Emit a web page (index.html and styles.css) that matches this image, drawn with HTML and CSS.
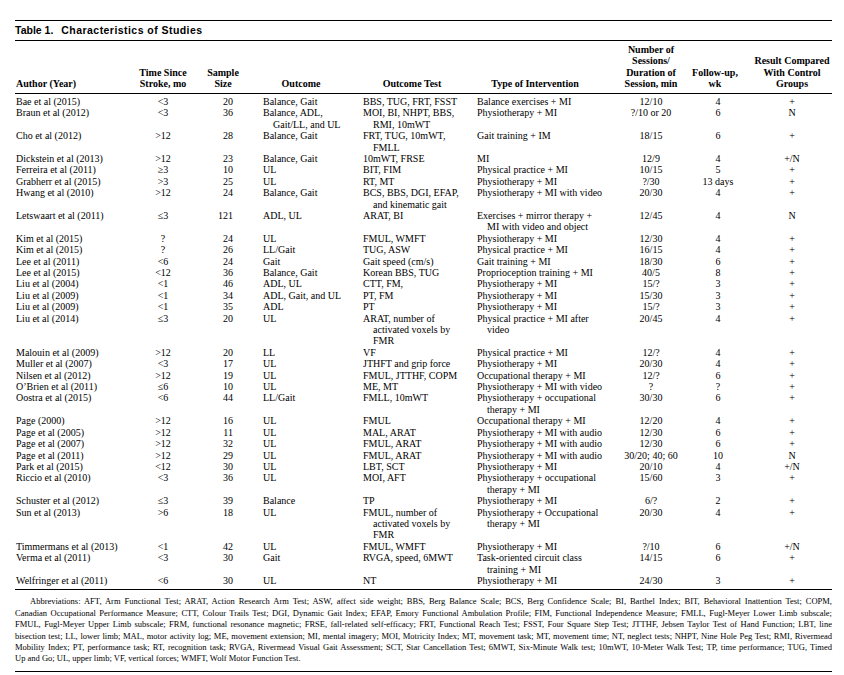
FILE: index.html
```html
<!DOCTYPE html>
<html lang="en">
<head>
<meta charset="utf-8">
<title>Table 1. Characteristics of Studies</title>
<link rel="stylesheet" href="styles.css">
</head>
<body>
<div class="page">
  <h1 class="title"><span class="num">Table 1.</span><span class="caption">Characteristics of Studies</span></h1>
  <table class="studies">
    <colgroup>
      <col class="w1"><col class="w2"><col class="w3"><col class="w4"><col class="w5"><col class="w6"><col class="w7"><col class="w8"><col class="w9">
    </colgroup>
    <thead>
      <tr>
        <th class="c1">Author (Year)</th>
        <th class="c2">Time Since<br>Stroke, mo</th>
        <th class="c3">Sample<br>Size</th>
        <th class="c4">Outcome</th>
        <th class="c5">Outcome Test</th>
        <th class="c6">Type of Intervention</th>
        <th class="c7">Number of<br>Sessions/<br>Duration of<br>Session, min</th>
        <th class="c8">Follow-up,<br>wk</th>
        <th class="c9">Result Compared<br>With Control<br>Groups</th>
      </tr>
    </thead>
    <tbody>
      <tr><td class="c1">Bae et al (2015)</td><td class="c2">&lt;3</td><td class="c3">20</td><td class="c4">Balance, Gait</td><td class="c5">BBS, TUG, FRT, FSST</td><td class="c6">Balance exercises + MI</td><td class="c7">12/10</td><td class="c8">4</td><td class="c9">+</td></tr>
      <tr><td class="c1">Braun et al (2012)</td><td class="c2">&lt;3</td><td class="c3">36</td><td class="c4">Balance, ADL,<br>Gait/LL, and UL</td><td class="c5">MOI, BI, NHPT, BBS,<br>RMI, 10mWT</td><td class="c6">Physiotherapy + MI</td><td class="c7">?/10 or 20</td><td class="c8">6</td><td class="c9">N</td></tr>
      <tr><td class="c1">Cho et al (2012)</td><td class="c2">&gt;12</td><td class="c3">28</td><td class="c4">Balance, Gait</td><td class="c5">FRT, TUG, 10mWT,<br>FMLL</td><td class="c6">Gait training + IM</td><td class="c7">18/15</td><td class="c8">6</td><td class="c9">+</td></tr>
      <tr><td class="c1">Dickstein et al (2013)</td><td class="c2">&gt;12</td><td class="c3">23</td><td class="c4">Balance, Gait</td><td class="c5">10mWT, FRSE</td><td class="c6">MI</td><td class="c7">12/9</td><td class="c8">4</td><td class="c9">+/N</td></tr>
      <tr><td class="c1">Ferreira et al (2011)</td><td class="c2">&ge;3</td><td class="c3">10</td><td class="c4">UL</td><td class="c5">BIT, FIM</td><td class="c6">Physical practice + MI</td><td class="c7">10/15</td><td class="c8">5</td><td class="c9">+</td></tr>
      <tr><td class="c1">Grabherr et al (2015)</td><td class="c2">&gt;3</td><td class="c3">25</td><td class="c4">UL</td><td class="c5">RT, MT</td><td class="c6">Physiotherapy + MI</td><td class="c7">?/30</td><td class="c8">13 days</td><td class="c9">+</td></tr>
      <tr><td class="c1">Hwang et al (2010)</td><td class="c2">&gt;12</td><td class="c3">24</td><td class="c4">Balance, Gait</td><td class="c5">BCS, BBS, DGI, EFAP,<br>and kinematic gait</td><td class="c6">Physiotherapy + MI with video</td><td class="c7">20/30</td><td class="c8">4</td><td class="c9">+</td></tr>
      <tr><td class="c1">Letswaart et al (2011)</td><td class="c2">&le;3</td><td class="c3">121</td><td class="c4">ADL, UL</td><td class="c5">ARAT, BI</td><td class="c6">Exercises + mirror therapy +<br>MI with video and object</td><td class="c7">12/45</td><td class="c8">4</td><td class="c9">N</td></tr>
      <tr><td class="c1">Kim et al (2015)</td><td class="c2">?</td><td class="c3">24</td><td class="c4">UL</td><td class="c5">FMUL, WMFT</td><td class="c6">Physiotherapy + MI</td><td class="c7">12/30</td><td class="c8">4</td><td class="c9">+</td></tr>
      <tr><td class="c1">Kim et al (2015)</td><td class="c2">?</td><td class="c3">26</td><td class="c4">LL/Gait</td><td class="c5">TUG, ASW</td><td class="c6">Physical practice + MI</td><td class="c7">16/15</td><td class="c8">4</td><td class="c9">+</td></tr>
      <tr><td class="c1">Lee et al (2011)</td><td class="c2">&lt;6</td><td class="c3">24</td><td class="c4">Gait</td><td class="c5">Gait speed (cm/s)</td><td class="c6">Gait training + MI</td><td class="c7">18/30</td><td class="c8">6</td><td class="c9">+</td></tr>
      <tr><td class="c1">Lee et al (2015)</td><td class="c2">&lt;12</td><td class="c3">36</td><td class="c4">Balance, Gait</td><td class="c5">Korean BBS, TUG</td><td class="c6">Proprioception training + MI</td><td class="c7">40/5</td><td class="c8">8</td><td class="c9">+</td></tr>
      <tr><td class="c1">Liu et al (2004)</td><td class="c2">&lt;1</td><td class="c3">46</td><td class="c4">ADL, UL</td><td class="c5">CTT, FM,</td><td class="c6">Physiotherapy + MI</td><td class="c7">15/?</td><td class="c8">3</td><td class="c9">+</td></tr>
      <tr><td class="c1">Liu et al (2009)</td><td class="c2">&lt;1</td><td class="c3">34</td><td class="c4">ADL, Gait, and UL</td><td class="c5">PT, FM</td><td class="c6">Physiotherapy + MI</td><td class="c7">15/30</td><td class="c8">3</td><td class="c9">+</td></tr>
      <tr><td class="c1">Liu et al (2009)</td><td class="c2">&lt;1</td><td class="c3">35</td><td class="c4">ADL</td><td class="c5">PT</td><td class="c6">Physiotherapy + MI</td><td class="c7">15/?</td><td class="c8">3</td><td class="c9">+</td></tr>
      <tr><td class="c1">Liu et al (2014)</td><td class="c2">&le;3</td><td class="c3">20</td><td class="c4">UL</td><td class="c5">ARAT, number of<br>activated voxels by<br>FMR</td><td class="c6">Physical practice + MI after<br>video</td><td class="c7">20/45</td><td class="c8">4</td><td class="c9">+</td></tr>
      <tr><td class="c1">Malouin et al (2009)</td><td class="c2">&gt;12</td><td class="c3">20</td><td class="c4">LL</td><td class="c5">VF</td><td class="c6">Physical practice + MI</td><td class="c7">12/?</td><td class="c8">4</td><td class="c9">+</td></tr>
      <tr><td class="c1">Muller et al (2007)</td><td class="c2">&lt;3</td><td class="c3">17</td><td class="c4">UL</td><td class="c5">JTHFT and grip force</td><td class="c6">Physiotherapy + MI</td><td class="c7">20/30</td><td class="c8">4</td><td class="c9">+</td></tr>
      <tr><td class="c1">Nilsen et al (2012)</td><td class="c2">&gt;12</td><td class="c3">19</td><td class="c4">UL</td><td class="c5">FMUL, JTTHF, COPM</td><td class="c6">Occupational therapy + MI</td><td class="c7">12/?</td><td class="c8">6</td><td class="c9">+</td></tr>
      <tr><td class="c1">O’Brien et al (2011)</td><td class="c2">&le;6</td><td class="c3">10</td><td class="c4">UL</td><td class="c5">ME, MT</td><td class="c6">Physiotherapy + MI with video</td><td class="c7">?</td><td class="c8">?</td><td class="c9">+</td></tr>
      <tr><td class="c1">Oostra et al (2015)</td><td class="c2">&lt;6</td><td class="c3">44</td><td class="c4">LL/Gait</td><td class="c5">FMLL, 10mWT</td><td class="c6">Physiotherapy + occupational<br>therapy + MI</td><td class="c7">30/30</td><td class="c8">6</td><td class="c9">+</td></tr>
      <tr><td class="c1">Page (2000)</td><td class="c2">&gt;12</td><td class="c3">16</td><td class="c4">UL</td><td class="c5">FMUL</td><td class="c6">Occupational therapy + MI</td><td class="c7">12/20</td><td class="c8">4</td><td class="c9">+</td></tr>
      <tr><td class="c1">Page et al (2005)</td><td class="c2">&gt;12</td><td class="c3">11</td><td class="c4">UL</td><td class="c5">MAL, ARAT</td><td class="c6">Physiotherapy + MI with audio</td><td class="c7">12/30</td><td class="c8">6</td><td class="c9">+</td></tr>
      <tr><td class="c1">Page et al (2007)</td><td class="c2">&gt;12</td><td class="c3">32</td><td class="c4">UL</td><td class="c5">FMUL, ARAT</td><td class="c6">Physiotherapy + MI with audio</td><td class="c7">12/30</td><td class="c8">6</td><td class="c9">+</td></tr>
      <tr><td class="c1">Page et al (2011)</td><td class="c2">&gt;12</td><td class="c3">29</td><td class="c4">UL</td><td class="c5">FMUL, ARAT</td><td class="c6">Physiotherapy + MI with audio</td><td class="c7">30/20; 40; 60</td><td class="c8">10</td><td class="c9">N</td></tr>
      <tr><td class="c1">Park et al (2015)</td><td class="c2">&lt;12</td><td class="c3">30</td><td class="c4">UL</td><td class="c5">LBT, SCT</td><td class="c6">Physiotherapy + MI</td><td class="c7">20/10</td><td class="c8">4</td><td class="c9">+/N</td></tr>
      <tr><td class="c1">Riccio et al (2010)</td><td class="c2">&lt;3</td><td class="c3">36</td><td class="c4">UL</td><td class="c5">MOI, AFT</td><td class="c6">Physiotherapy + occupational<br>therapy + MI</td><td class="c7">15/60</td><td class="c8">3</td><td class="c9">+</td></tr>
      <tr><td class="c1">Schuster et al (2012)</td><td class="c2">&le;3</td><td class="c3">39</td><td class="c4">Balance</td><td class="c5">TP</td><td class="c6">Physiotherapy + MI</td><td class="c7">6/?</td><td class="c8">2</td><td class="c9">+</td></tr>
      <tr><td class="c1">Sun et al (2013)</td><td class="c2">&gt;6</td><td class="c3">18</td><td class="c4">UL</td><td class="c5">FMUL, number of<br>activated voxels by<br>FMR</td><td class="c6">Physiotherapy + Occupational<br>therapy + MI</td><td class="c7">20/30</td><td class="c8">4</td><td class="c9">+</td></tr>
      <tr><td class="c1">Timmermans et al (2013)</td><td class="c2">&lt;1</td><td class="c3">42</td><td class="c4">UL</td><td class="c5">FMUL, WMFT</td><td class="c6">Physiotherapy + MI</td><td class="c7">?/10</td><td class="c8">6</td><td class="c9">+/N</td></tr>
      <tr><td class="c1">Verma et al (2011)</td><td class="c2">&lt;3</td><td class="c3">30</td><td class="c4">Gait</td><td class="c5">RVGA, speed, 6MWT</td><td class="c6">Task-oriented circuit class<br>training + MI</td><td class="c7">14/15</td><td class="c8">6</td><td class="c9">+</td></tr>
      <tr class="last"><td class="c1">Welfringer et al (2011)</td><td class="c2">&lt;6</td><td class="c3">30</td><td class="c4">UL</td><td class="c5">NT</td><td class="c6">Physiotherapy + MI</td><td class="c7">24/30</td><td class="c8">3</td><td class="c9">+</td></tr>
    </tbody>
  </table>
  <div class="notes">
    <span class="line first">Abbreviations: AFT, Arm Functional Test; ARAT, Action Research Arm Test; ASW, affect side weight; BBS, Berg Balance Scale; BCS, Berg Confidence Scale; BI, Barthel Index; BIT, Behavioral Inattention Test; COPM,</span>
    <span class="line">Canadian Occupational Performance Measure; CTT, Colour Trails Test; DGI, Dynamic Gait Index; EFAP, Emory Functional Ambulation Profile; FIM, Functional Independence Measure; FMLL, Fugl-Meyer Lower Limb subscale;</span>
    <span class="line">FMUL, Fugl-Meyer Upper Limb subscale; FRM, functional resonance magnetic; FRSE, fall-related self-efficacy; FRT, Functional Reach Test; FSST, Four Square Step Test; JTTHF, Jebsen Taylor Test of Hand Function; LBT, line</span>
    <span class="line">bisection test; LL, lower limb; MAL, motor activity log; ME, movement extension; MI, mental imagery; MOI, Motricity Index; MT, movement task; MT, movement time; NT, neglect tests; NHPT, Nine Hole Peg Test; RMI, Rivermead</span>
    <span class="line">Mobility Index; PT, performance task; RT, recognition task; RVGA, Rivermead Visual Gait Assessment; SCT, Star Cancellation Test; 6MWT, Six-Minute Walk test; 10mWT, 10-Meter Walk Test; TP, time performance; TUG, Timed</span>
    <span class="line end">Up and Go; UL, upper limb; VF, vertical forces; WMFT, Wolf Motor Function Test.</span>
  </div>
</div>
</body>
</html>
```
FILE: styles.css
```css
html, body {
  margin: 0;
  padding: 0;
  background: #ffffff;
}

body {
  color: #000000;
  font-family: "Liberation Serif", "Times New Roman", serif;
  font-size: 10px;
}

.page {
  width: 817px;
  margin: 0 0 0 15px;
  padding-top: 20px;
}

.title {
  margin: 0;
  height: 19px;
  line-height: 19px;
  border-top: 1px solid #000;
  border-bottom: 1px solid #000;
  font-family: "Liberation Sans", Arial, sans-serif;
  font-weight: bold;
  font-size: 10.5px;
  white-space: nowrap;
}

.title .num {
  margin-right: 8px;
}

.title .caption {
  letter-spacing: 0.45px;
}

.studies {
  width: 817px;
  table-layout: fixed;
  border-collapse: collapse;
  border-spacing: 0;
  margin-top: 3px;
  font-family: "Liberation Serif", "Times New Roman", serif;
  font-size: 10px;
}

.w1 { width: 120px; }
.w2 { width: 56px; }
.w3 { width: 69px; }
.w4 { width: 102px; }
.w5 { width: 114px; }
.w6 { width: 142px; }
.w7 { width: 66px; }
.w8 { width: 68px; }
.w9 { width: 80px; }

.studies th,
.studies td {
  padding: 0;
  line-height: 11.4px;
  white-space: nowrap;
  vertical-align: top;
}

.studies th {
  font-weight: bold;
  vertical-align: bottom;
  padding-bottom: 3px;
  border-bottom: 1px solid #000;
  text-align: center;
}

.studies th.c1 { text-align: left; padding-left: 1px; }
.studies th.c3 { padding-right: 5px; }
.studies th.c4 { padding-right: 20px; }
.studies th.c5 { padding-right: 14px; }
.studies th.c6 { padding-right: 24px; }
.studies th.c8 { padding-right: 6px; }

.studies td.c1 { padding-left: 1px; }
.studies td.c2 { text-align: center; }
.studies td.c3 { text-align: right; padding-right: 27px; }
.studies td.c4 { padding-left: 13px; text-indent: -10px; }
.studies td.c5 { padding-left: 11px; text-indent: -10px; }
.studies td.c6 { padding-left: 11px; text-indent: -10px; }
.studies td.c7,
.studies td.c8,
.studies td.c9 { text-align: center; }

.studies tbody tr:first-child td { padding-top: 2.3px; }
.studies tbody tr.last td {
  padding-bottom: 3px;
  border-bottom: 1px solid #000;
}

.notes {
  padding: 6px 0 6px;
  border-bottom: 1px solid #000;
  font-size: 8.5px;
  line-height: 11.4px;
}

.notes .line {
  display: block;
  text-align: justify;
  text-align-last: justify;
  white-space: nowrap;
}

.notes .line.first {
  padding-left: 15px;
}

.notes .line.end {
  text-align-last: left;
}
```
